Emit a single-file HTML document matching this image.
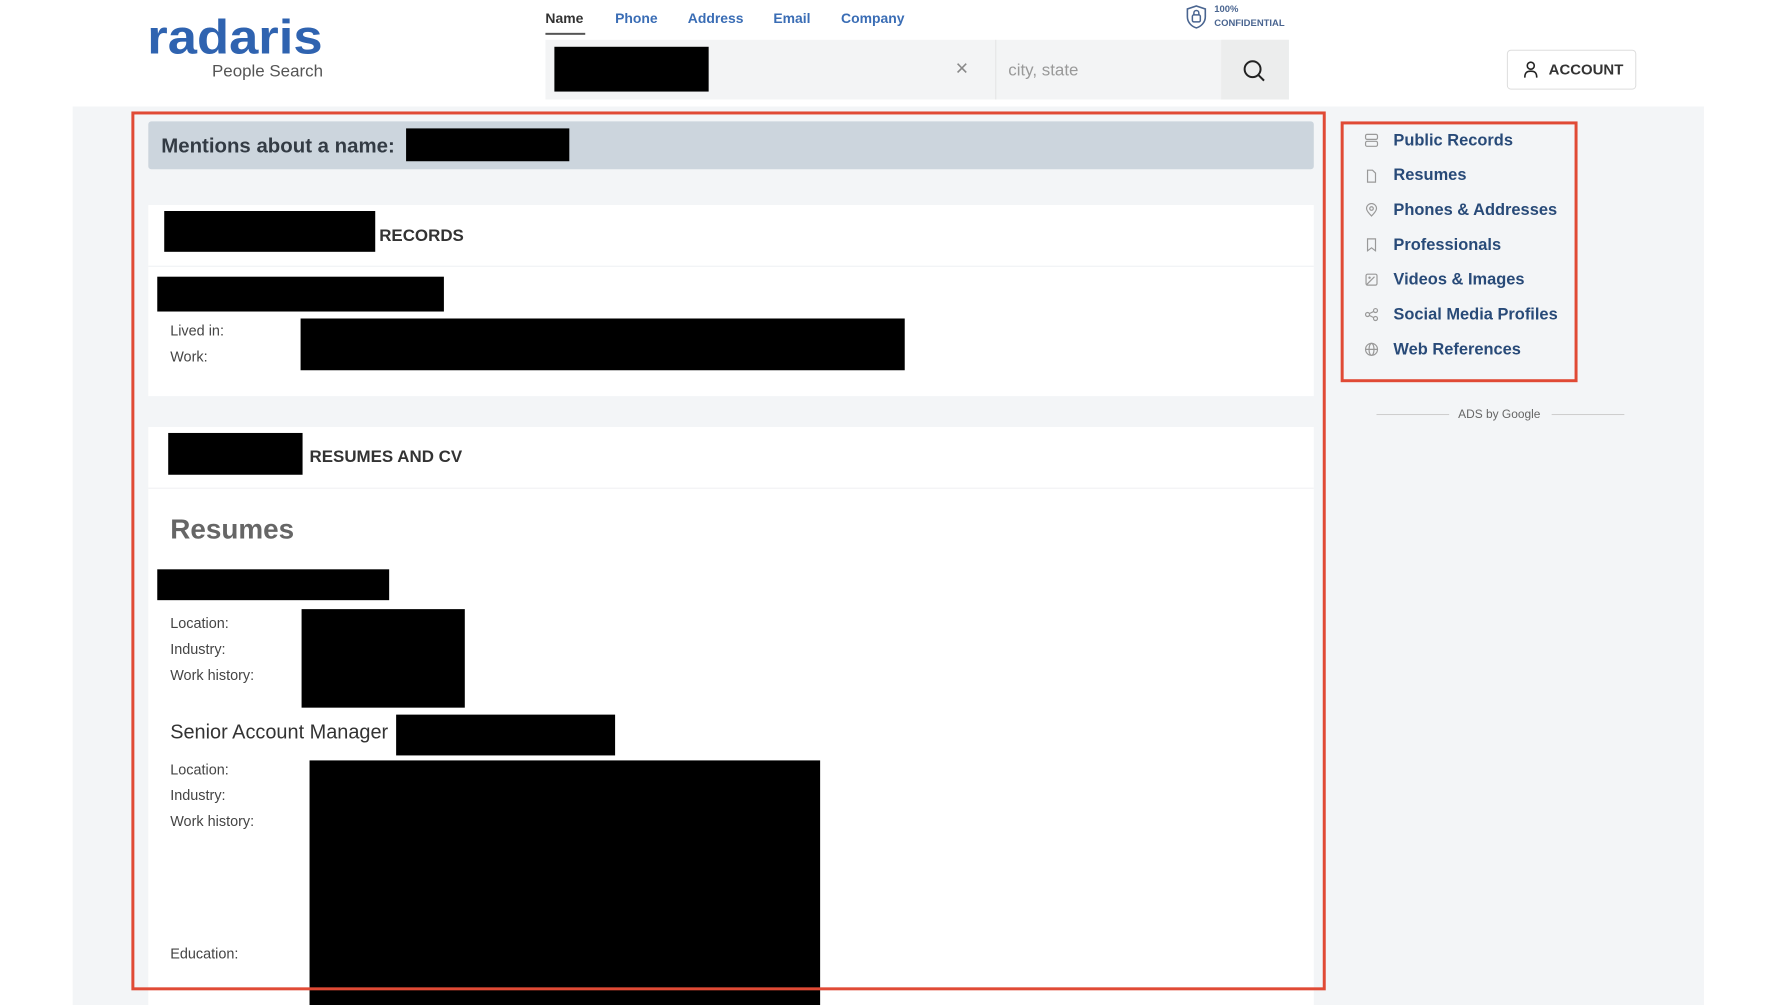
<!DOCTYPE html>
<html><head><meta charset="utf-8"><style>
*{margin:0;padding:0;box-sizing:border-box}
body{width:1778px;height:1000px;overflow:hidden;background:#fff;font-family:"Liberation Sans",sans-serif;position:relative}
#w{position:absolute;left:0;top:0;width:1790px;height:1010px;transform:scale(0.9953);transform-origin:0 0}
.a{position:absolute}
.bk{position:absolute;background:#000}
.nav{position:absolute;top:10px;font-size:14px;font-weight:bold;color:#3a6db5}
.lbl{position:absolute;left:171px;font-size:14.5px;color:#444}
.side{position:absolute;left:1400px;font-size:16.5px;font-weight:bold;color:#284a78}
.ic{position:absolute;left:1371px;width:14px;height:14px}
</style></head><body><div id="w">
<div class="a" style="left:148px;top:11px;font-size:48px;font-weight:bold;color:#2f63b0;letter-spacing:0;transform:scaleX(1.1);transform-origin:left">radaris</div>
<div class="a" style="left:213px;top:62px;font-size:17px;color:#555">People Search</div>

<div class="nav" style="left:548px;color:#333">Name</div>
<div class="a" style="left:548px;top:33px;width:40px;height:2px;background:#555"></div>
<div class="nav" style="left:618px">Phone</div>
<div class="nav" style="left:691px">Address</div>
<div class="nav" style="left:777px">Email</div>
<div class="nav" style="left:845px">Company</div>

<svg class="a" style="left:1191px;top:4px" width="22" height="26" viewBox="0 0 22 26"><path d="M11 2 L20 5 V13 C20 19 15 23 11 24 C7 23 2 19 2 13 V5 Z" fill="none" stroke="#4a6590" stroke-width="1.6"/><rect x="7" y="11" width="8" height="7" rx="1.5" fill="none" stroke="#4a6590" stroke-width="1.5"/><path d="M8.5 11 V9 a2.5 2.5 0 0 1 5 0 V11" fill="none" stroke="#4a6590" stroke-width="1.5"/></svg>
<div class="a" style="left:1220px;top:3px;font-size:9.5px;font-weight:bold;color:#4a6590;line-height:14px">100%<br>CONFIDENTIAL</div>

<div class="a" style="left:548px;top:40px;width:747px;height:60px;background:#f3f4f5"></div>
<div class="a" style="left:1000px;top:40px;width:1px;height:60px;background:#e4e4e4"></div>
<div class="a" style="left:1227px;top:40px;width:68px;height:60px;background:#eceded"></div>
<div class="bk" style="left:557px;top:47px;width:155px;height:45px"></div>
<div class="a" style="left:960px;top:56px;font-size:22px;color:#888">×</div>
<div class="a" style="left:1013px;top:61px;font-size:17px;color:#999">city, state</div>
<svg class="a" style="left:1248px;top:59px" width="24" height="24" viewBox="0 0 24 24"><circle cx="10.5" cy="10.5" r="8" fill="none" stroke="#222" stroke-width="2"/><path d="M16.5 16.5 L22 22" stroke="#222" stroke-width="2"/></svg>
<div class="a" style="left:1514px;top:50px;width:130px;height:40px;border:1px solid #ddd;border-radius:4px;background:#fff"></div>
<svg class="a" style="left:1530px;top:61px" width="16" height="18" viewBox="0 0 16 18"><circle cx="8" cy="5" r="3.5" fill="none" stroke="#222" stroke-width="1.6"/><path d="M2 17 C2 12 4 10.5 8 10.5 C12 10.5 14 12 14 17" fill="none" stroke="#222" stroke-width="1.6"/></svg>
<div class="a" style="left:1556px;top:62px;font-size:15px;font-weight:bold;color:#333">ACCOUNT</div>

<div class="a" style="left:73px;top:107px;width:1639px;height:903px;background:#f3f5f7"></div>
<div class="a" style="left:149px;top:122px;width:1171px;height:48px;background:#ccd5dd;border-radius:3px"></div>
<div class="a" style="left:162px;top:135px;font-size:20.5px;font-weight:bold;color:#333b44">Mentions about a name:</div>
<div class="bk" style="left:408px;top:129px;width:164px;height:33px"></div>

<div class="a" style="left:149px;top:206px;width:1171px;height:192px;background:#fff"></div>
<div class="a" style="left:149px;top:267px;width:1171px;height:1px;background:#eef0f2"></div>
<div class="bk" style="left:165px;top:212px;width:212px;height:41px"></div>
<div class="a" style="left:381px;top:227px;font-size:17px;font-weight:bold;color:#333">RECORDS</div>
<div class="bk" style="left:158px;top:278px;width:288px;height:35px"></div>
<div class="lbl" style="top:325px">Lived in:</div>
<div class="lbl" style="top:351px">Work:</div>
<div class="bk" style="left:302px;top:320px;width:607px;height:52px"></div>

<div class="a" style="left:149px;top:429px;width:1171px;height:581px;background:#fff"></div>
<div class="a" style="left:149px;top:490px;width:1171px;height:1px;background:#eef0f2"></div>
<div class="bk" style="left:169px;top:435px;width:135px;height:42px"></div>
<div class="a" style="left:311px;top:449px;font-size:17px;font-weight:bold;color:#333">RESUMES AND CV</div>
<div class="a" style="left:171px;top:516px;font-size:28px;font-weight:bold;color:#666">Resumes</div>
<div class="bk" style="left:158px;top:572px;width:233px;height:31px"></div>
<div class="lbl" style="top:619px">Location:</div>
<div class="lbl" style="top:645px">Industry:</div>
<div class="lbl" style="top:671px">Work history:</div>
<div class="bk" style="left:303px;top:612px;width:164px;height:99px"></div>
<div class="a" style="left:171px;top:725px;font-size:20px;color:#333">Senior Account Manager</div>
<div class="bk" style="left:398px;top:718px;width:220px;height:41px"></div>
<div class="lbl" style="top:766px">Location:</div>
<div class="lbl" style="top:792px">Industry:</div>
<div class="lbl" style="top:818px">Work history:</div>
<div class="lbl" style="top:951px">Education:</div>
<div class="bk" style="left:311px;top:764px;width:513px;height:246px"></div>

<div class="a" style="left:132px;top:112px;width:1200px;height:883px;border:3px solid #e04a35"></div>

<div class="a" style="left:1347px;top:122px;width:238px;height:262px;border:3px solid #e04a35"></div>
<svg class="ic" style="top:134px" viewBox="0 0 14 14"><rect x="1" y="1" width="12" height="5" rx="1.5" fill="none" stroke="#999" stroke-width="1.2"/><rect x="1" y="8" width="12" height="5" rx="1.5" fill="none" stroke="#999" stroke-width="1.2"/></svg>
<div class="side" style="top:132px">Public Records</div>
<svg class="ic" style="top:170px" viewBox="0 0 14 14"><path d="M3 1 H8 L11 4 V13 H3 Z" fill="none" stroke="#999" stroke-width="1.2"/></svg>
<div class="side" style="top:167px">Resumes</div>
<svg class="ic" style="top:204px" viewBox="0 0 14 14"><path d="M7 13 C3 9 2 7 2 5.5 a5 5 0 0 1 10 0 C12 7 11 9 7 13Z" fill="none" stroke="#999" stroke-width="1.2"/><circle cx="7" cy="5.5" r="1.8" fill="none" stroke="#999" stroke-width="1.2"/></svg>
<div class="side" style="top:202px">Phones &amp; Addresses</div>
<svg class="ic" style="top:239px" viewBox="0 0 14 14"><path d="M3 1 H11 V13 L7 10 L3 13 Z" fill="none" stroke="#999" stroke-width="1.2"/></svg>
<div class="side" style="top:237px">Professionals</div>
<svg class="ic" style="top:274px" viewBox="0 0 14 14"><rect x="1.5" y="1.5" width="11" height="11" rx="1.5" fill="none" stroke="#999" stroke-width="1.2"/><path d="M2 12 L10 4" stroke="#999" stroke-width="1.2"/><circle cx="5" cy="5" r="1.2" fill="#999"/></svg>
<div class="side" style="top:272px">Videos &amp; Images</div>
<svg class="ic" style="top:309px" viewBox="0 0 14 14"><circle cx="3" cy="7" r="2" fill="none" stroke="#999" stroke-width="1.2"/><circle cx="11" cy="3" r="2" fill="none" stroke="#999" stroke-width="1.2"/><circle cx="11" cy="11" r="2" fill="none" stroke="#999" stroke-width="1.2"/><path d="M5 6 L9 4 M5 8 L9 10" stroke="#999" stroke-width="1.2"/></svg>
<div class="side" style="top:307px">Social Media Profiles</div>
<svg class="ic" style="top:344px" viewBox="0 0 14 14"><circle cx="7" cy="7" r="6" fill="none" stroke="#999" stroke-width="1.2"/><ellipse cx="7" cy="7" rx="2.5" ry="6" fill="none" stroke="#999" stroke-width="1.2"/><path d="M1 7 H13" stroke="#999" stroke-width="1.2"/></svg>
<div class="side" style="top:342px">Web References</div>

<div class="a" style="left:1383px;top:416px;width:73px;height:1px;background:#ccc"></div>
<div class="a" style="left:1465px;top:409px;font-size:12px;color:#666">ADS by Google</div>
<div class="a" style="left:1559px;top:416px;width:73px;height:1px;background:#ccc"></div>
</div></body></html>
